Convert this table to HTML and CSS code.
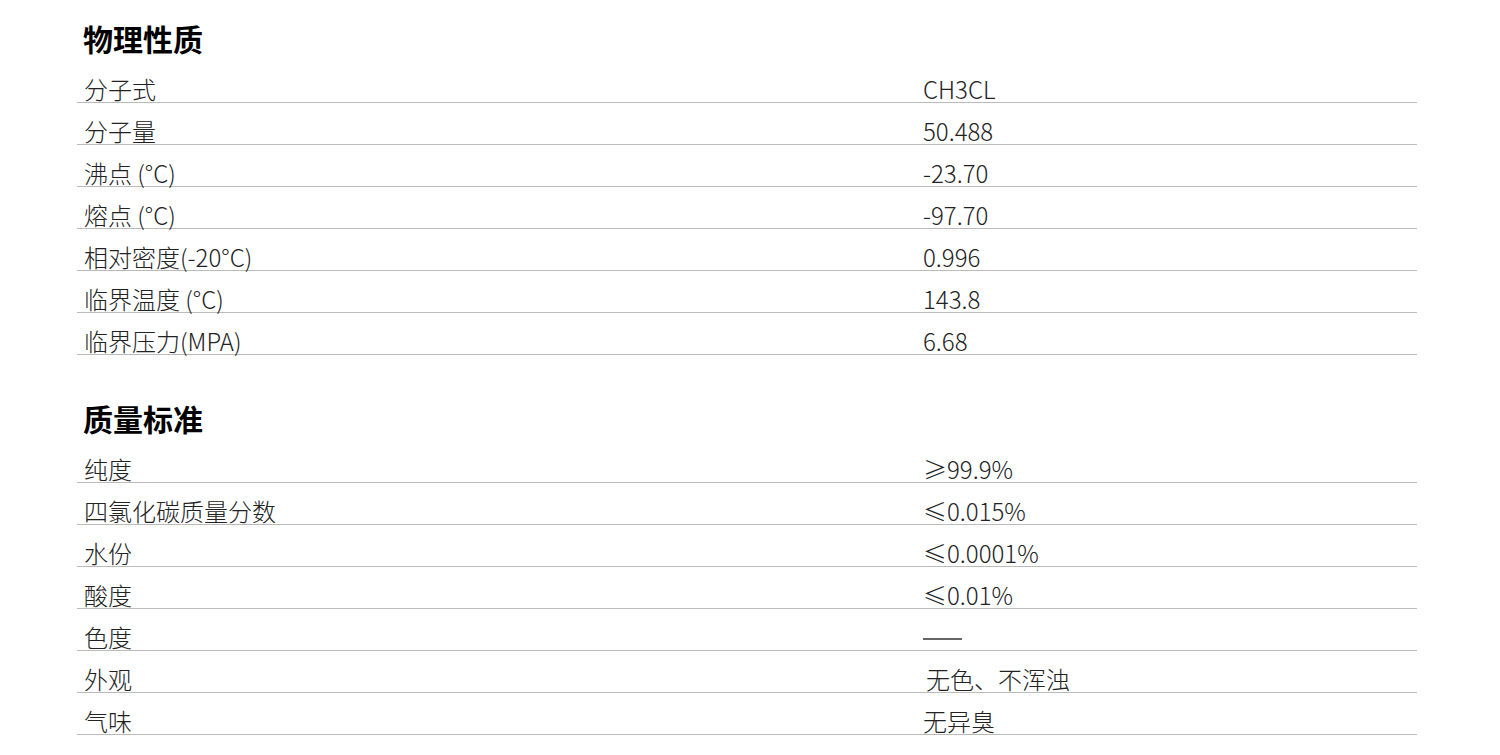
FILE: index.html
```html
<!DOCTYPE html>
<html lang="zh-CN">
<head>
<meta charset="utf-8">
<title>物理性质</title>
<link rel="stylesheet" href="styles.css">
</head>
<body>
<div class="page">
  <section class="block">
    <h2 class="title">物理性质</h2>
    <div class="table">
      <div class="row"><div class="k">分子式</div><div class="v">CH3CL</div></div>
      <div class="row"><div class="k">分子量</div><div class="v">50.488</div></div>
      <div class="row"><div class="k">沸点 (°C)</div><div class="v">-23.70</div></div>
      <div class="row"><div class="k">熔点 (°C)</div><div class="v">-97.70</div></div>
      <div class="row"><div class="k">相对密度(-20°C)</div><div class="v">0.996</div></div>
      <div class="row"><div class="k">临界温度 (°C)</div><div class="v">143.8</div></div>
      <div class="row"><div class="k">临界压力(MPA)</div><div class="v">6.68</div></div>
    </div>
  </section>
  <section class="block second">
    <h2 class="title">质量标准</h2>
    <div class="table">
      <div class="row"><div class="k">纯度</div><div class="v">≥99.9%</div></div>
      <div class="row"><div class="k">四氯化碳质量分数</div><div class="v">≤0.015%</div></div>
      <div class="row"><div class="k">水份</div><div class="v">≤0.0001%</div></div>
      <div class="row"><div class="k">酸度</div><div class="v">≤0.01%</div></div>
      <div class="row"><div class="k">色度</div><div class="v"><span class="dash"></span></div></div>
      <div class="row"><div class="k">外观</div><div class="v indent">无色、不浑浊</div></div>
      <div class="row"><div class="k">气味</div><div class="v">无异臭</div></div>
    </div>
  </section>
</div>
</body>
</html>
```

FILE: styles.css
```css
html, body {
  margin: 0;
  padding: 0;
  background: #ffffff;
}

body {
  font-family: "Noto Sans CJK SC", "Noto Sans", sans-serif;
  color: #222222;
}

.page {
  width: 1340px;
  margin-left: 77px;
}

.block {
  display: flex;
  flex-direction: column;
}

.second {
  margin-top: 43px;
}

.title {
  margin: 0;
  height: 43px;
  padding-top: 18px;
  padding-left: 6px;
  font-size: 30px;
  font-weight: 700;
  line-height: 40px;
  color: #000000;
}

.second .title {
  padding-top: 0;
}

.table {
  display: flex;
  flex-direction: column;
}

.row {
  display: grid;
  grid-template-columns: 846px 1fr;
  height: 41px;
  align-items: end;
  border-bottom: 1px solid #bbbbbb;
}

.k, .v {
  font-size: 24px;
  font-weight: 300;
  line-height: 24px;
  margin-bottom: 1px;
  white-space: nowrap;
}

.k {
  padding-left: 7px;
}

.indent {
  padding-left: 3px;
}

.dash {
  display: inline-block;
  width: 39px;
  height: 2px;
  background: #666666;
  vertical-align: middle;
  margin-bottom: 2px;
}
```
